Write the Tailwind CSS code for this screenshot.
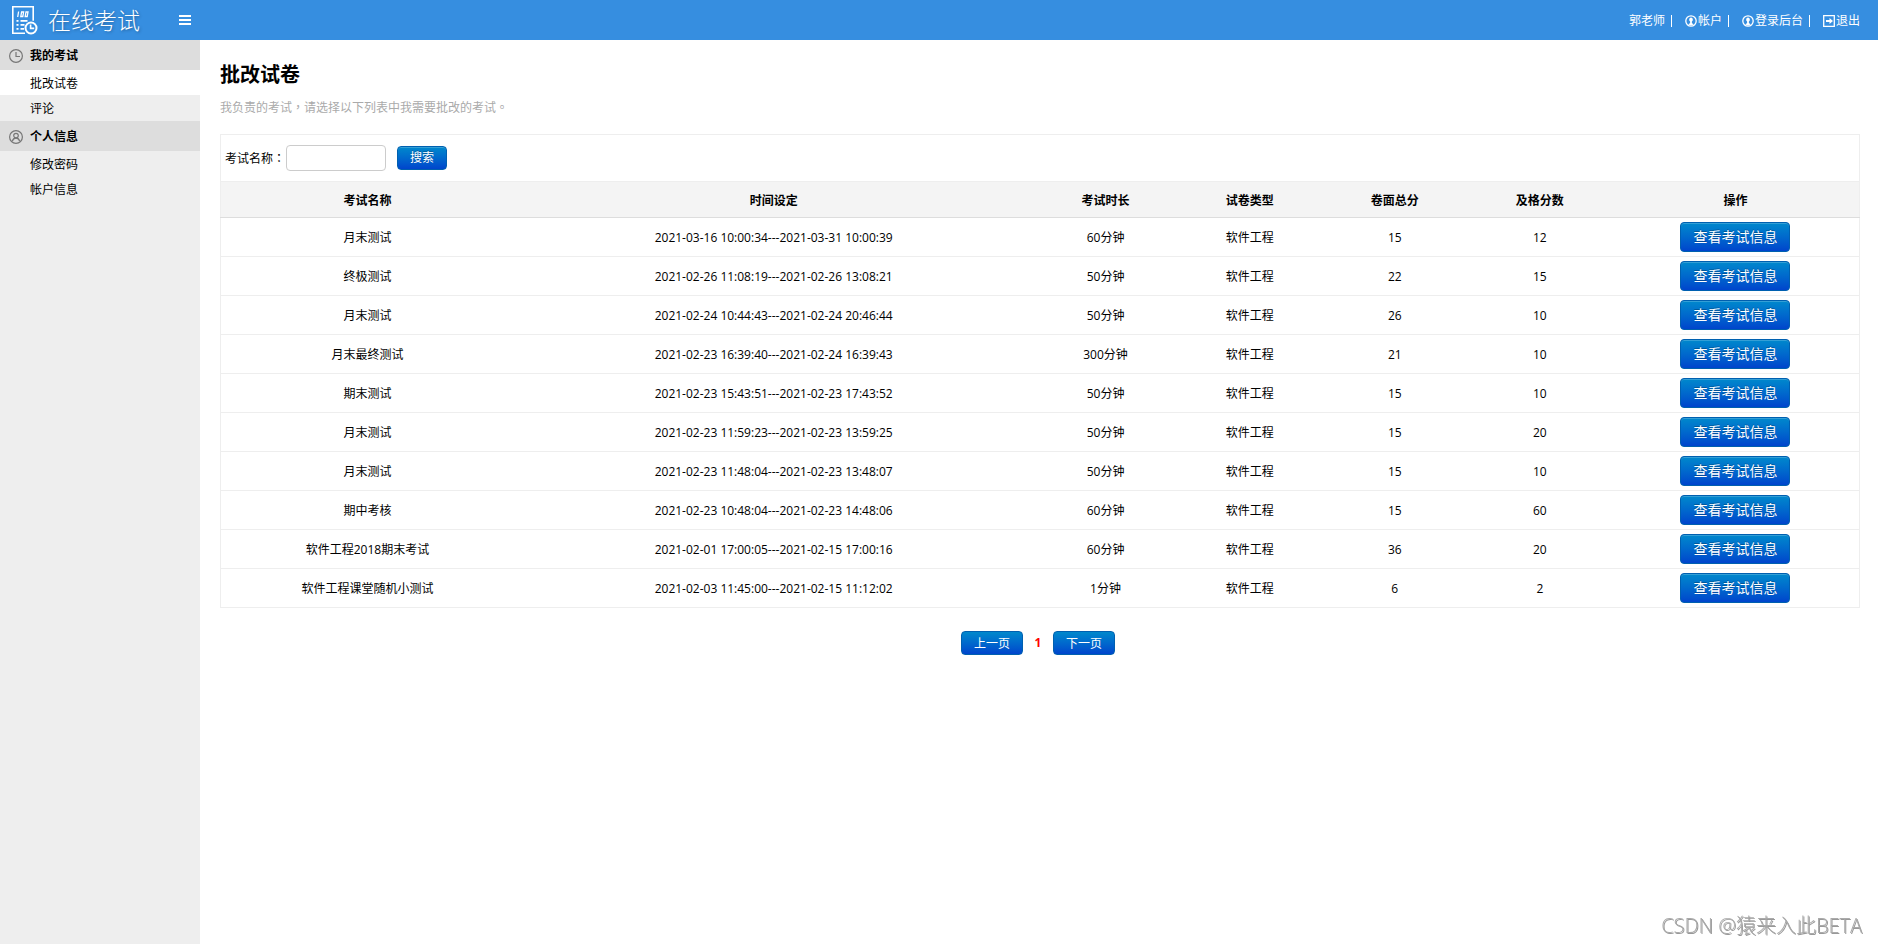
<!DOCTYPE html>
<html lang="zh-CN">
<head>
    <meta charset="UTF-8">
    <meta name="viewport" content="width=device-width, initial-scale=1.0">
    <title>在线考试</title>
    <script src="https://cdn.jsdelivr.net/npm/@tailwindcss/browser@4"></script>
</head>
<body class="min-h-screen flex flex-col bg-white text-black text-[12px] leading-[18px] font-['Open_Sans','Noto_Sans_CJK_SC',sans-serif]">

    <header class="h-10 bg-[#368ee0] text-white flex items-center justify-between pl-3 pr-[18px]">
        <div class="flex items-center">
            <svg class="w-[26px] h-[30px]" viewBox="0 0 26 30" fill="none" stroke="#fff" stroke-width="1.6">
                <path d="M13 28.2H.8V1.8h20.4v14"/>
                <path d="M6.6 6.5l-.9 5.500M9.600 7h2l-.8 4.500h-2zM14 7h2l-.8 4.500h-2z" stroke-width="1.3"/>
                <path d="M4.500 15.800h2M8.500 15.800h7M4.500 19.800h2M8.500 19.800h4M4.500 23.800h2M8.500 23.800h3.500" stroke-width="1.8"/>
                <circle cx="19" cy="23" r="5.5" stroke-width="2"/>
                <path d="M18.600 19.600v3.800h3.600" stroke-width="1.6"/>
            </svg>
            <h1 class="ml-[10px] text-[23px] leading-[30px] font-light text-shadow-[1px_1px_3px_rgba(0,0,0,0.3)]">在线考试</h1>
            <button type="button" aria-label="菜单" class="ml-[39px] cursor-pointer">
                <svg class="w-3 h-[10px]" viewBox="0 0 12 10" fill="#fff"><path d="M0 0h12v2H0zM0 4h12v2H0zM0 8h12v2H0z"/></svg>
            </button>
        </div>
        <nav class="flex items-center pt-0.5">
            <span>郭老师</span>
            <span class="w-px h-3 ml-[6px] mr-[13px] bg-white"></span>
            <a href="#" class="flex items-center gap-px">
                <svg class="w-3 h-3" viewBox="0 0 12 12"><circle cx="6" cy="6" r="5.2" fill="none" stroke="#fff" stroke-width="1.3"/><path d="M6 2.4a1.900 2.200 0 0 1 .9 4.100v1.500l1.800 1.500L6 10.600 3.300 9.500l1.800-1.500V6.500A1.900 2.200 0 0 1 6 2.400z" fill="#fff"/></svg>帐户
            </a>
            <span class="w-px h-3 ml-[6px] mr-[13px] bg-white"></span>
            <a href="#" class="flex items-center gap-px">
                <svg class="w-3 h-3" viewBox="0 0 12 12"><circle cx="6" cy="6" r="5.2" fill="none" stroke="#fff" stroke-width="1.3"/><path d="M6 2.4a1.900 2.200 0 0 1 .9 4.100v1.500l1.800 1.500L6 10.600 3.300 9.500l1.800-1.500V6.500A1.900 2.200 0 0 1 6 2.400z" fill="#fff"/></svg>登录后台
            </a>
            <span class="w-px h-3 ml-[6px] mr-[13px] bg-white"></span>
            <a href="#" class="flex items-center gap-px">
                <svg class="w-3 h-3" viewBox="0 0 12 12"><path d="M.7.7h10.600v10.600H.7z" fill="none" stroke="#fff" stroke-width="1.3"/><path d="M3 5h3.500V3L10 6 6.500 9V7H3z" fill="#fff"/></svg>退出
            </a>
        </nav>
    </header>

    <div class="flex flex-1">
        <aside class="w-[200px] shrink-0 bg-[#eee]">
            <h2 class="h-[30px] flex items-center gap-[7px] pt-0.5 pl-[9px] bg-[#ddd] font-bold">
                <svg class="w-[14px] h-[14px]" viewBox="0 0 14 14" fill="none" stroke="#777" stroke-width="1.2"><circle cx="7" cy="7" r="6.4"/><path d="M7 3v4.5h4"/></svg>我的考试
            </h2>
            <ul class="pb-px">
                <li><a href="#" class="block h-[25px] leading-[27px] pl-[30px] bg-white">批改试卷</a></li>
                <li><a href="#" class="block h-[25px] leading-[27px] pl-[30px]">评论</a></li>
            </ul>
            <h2 class="h-[30px] flex items-center gap-[7px] pt-0.5 pl-[9px] bg-[#ddd] font-bold">
                <svg class="w-[14px] h-[14px]" viewBox="0 0 14 14" fill="none" stroke="#777" stroke-width="1.2"><circle cx="7" cy="7" r="6.4"/><circle cx="7" cy="5.6" r="2.3"/><path d="M3.4 11.2c.4-2 1.7-3 3.6-3s3.2 1 3.6 3"/></svg>个人信息
            </h2>
            <ul>
                <li><a href="#" class="block h-[25px] leading-[27px] pl-[30px]">修改密码</a></li>
                <li><a href="#" class="block h-[25px] leading-[27px] pl-[30px]">帐户信息</a></li>
            </ul>
        </aside>

        <main class="flex-1 pl-5 pr-[18px] pt-[21px]">
            <h2 class="text-[20px] leading-[28px] font-bold">批改试卷</h2>
            <p class="mt-[9px] text-[#aaa]">我负责的考试<span lang="zh-TW" class="font-['Noto_Sans_CJK_TC',sans-serif]">，</span>请选择以下列表中我需要批改的考试<span lang="zh-TW" class="font-['Noto_Sans_CJK_TC',sans-serif]">。</span></p>

            <form class="mt-[17px] h-[47px] flex items-center pl-1 border border-b-0 border-[#eee]">
                <label for="paper-name" class="w-[61px]">考试名称<span lang="zh-TW" class="font-['Noto_Sans_CJK_TC',sans-serif]">：</span></label>
                <input id="paper-name" name="paper-name" type="text" class="w-[100px] h-[26px] px-2 border border-[#ccc] rounded">
                <button type="submit" class="ml-[11px] h-6 px-3 rounded border border-[#0060b0] bg-linear-to-b from-[#0088cc] to-[#0044cc] text-white text-shadow-[0_-1px_0_rgba(0,0,0,0.25)] inset-shadow-[0_1px_0_rgba(255,255,255,0.2)] flex items-center cursor-pointer">搜索</button>
            </form>

            <table class="w-full table-fixed border-collapse border border-[#eee] text-center">
                <thead>
                    <tr class="h-9 bg-[#f4f4f4] border-b border-[#ddd]">
                        <th class="w-[17.9%] pt-0.5">考试名称</th>
                        <th class="w-[31.7%] pt-0.5">时间设定</th>
                        <th class="w-[8.8%] pt-0.5">考试时长</th>
                        <th class="w-[8.8%] pt-0.5">试卷类型</th>
                        <th class="w-[8.9%] pt-0.5">卷面总分</th>
                        <th class="w-[8.8%] pt-0.5">及格分数</th>
                        <th class="pt-0.5">操作</th>
                    </tr>
                </thead>
                <tbody id="paper-list"></tbody>
            </table>

            <div class="mt-[23px] pr-1 flex items-center justify-center">
                <button type="button" class="h-6 px-3 pt-0.5 rounded border border-[#0060b0] bg-linear-to-b from-[#0088cc] to-[#0044cc] text-white flex items-center cursor-pointer">上一页</button>
                <span class="w-[30px] text-center font-bold text-[#f00]">1</span>
                <button type="button" class="h-6 px-3 pt-0.5 rounded border border-[#0060b0] bg-linear-to-b from-[#0088cc] to-[#0044cc] text-white flex items-center cursor-pointer">下一页</button>
            </div>
        </main>
    </div>

    <div class="fixed right-4 bottom-1 text-[20px] leading-7 font-light text-[#aaa] text-shadow-[1px_1px_0_#999]">CSDN @猿来入此BETA</div>

    <script>
        const papers = [
            ['月末测试', '2021-03-16 10:00:34---2021-03-31 10:00:39', '60分钟', '软件工程', 15, 12],
            ['终极测试', '2021-02-26 11:08:19---2021-02-26 13:08:21', '50分钟', '软件工程', 22, 15],
            ['月末测试', '2021-02-24 10:44:43---2021-02-24 20:46:44', '50分钟', '软件工程', 26, 10],
            ['月末最终测试', '2021-02-23 16:39:40---2021-02-24 16:39:43', '300分钟', '软件工程', 21, 10],
            ['期末测试', '2021-02-23 15:43:51---2021-02-23 17:43:52', '50分钟', '软件工程', 15, 10],
            ['月末测试', '2021-02-23 11:59:23---2021-02-23 13:59:25', '50分钟', '软件工程', 15, 20],
            ['月末测试', '2021-02-23 11:48:04---2021-02-23 13:48:07', '50分钟', '软件工程', 15, 10],
            ['期中考核', '2021-02-23 10:48:04---2021-02-23 14:48:06', '60分钟', '软件工程', 15, 60],
            ['软件工程2018期末考试', '2021-02-01 17:00:05---2021-02-15 17:00:16', '60分钟', '软件工程', 36, 20],
            ['软件工程课堂随机小测试', '2021-02-03 11:45:00---2021-02-15 11:12:02', '1分钟', '软件工程', 6, 2]
        ];

        document.getElementById('paper-list').innerHTML = papers.map(p => `
            <tr class="h-[39px] border-b border-[#eee]">
                ${p.map(v => `<td class="pt-0.5">${v}</td>`).join('')}
                <td><button type="button" class="h-[30px] px-3 align-middle rounded border border-[#0060b0] bg-linear-to-b from-[#0088cc] to-[#0044cc] text-white text-[14px] leading-5 text-shadow-[0_-1px_0_rgba(0,0,0,0.25)] inset-shadow-[0_1px_0_rgba(255,255,255,0.2)] cursor-pointer">查看考试信息</button></td>
            </tr>`).join('');
    </script>
</body>
</html>
